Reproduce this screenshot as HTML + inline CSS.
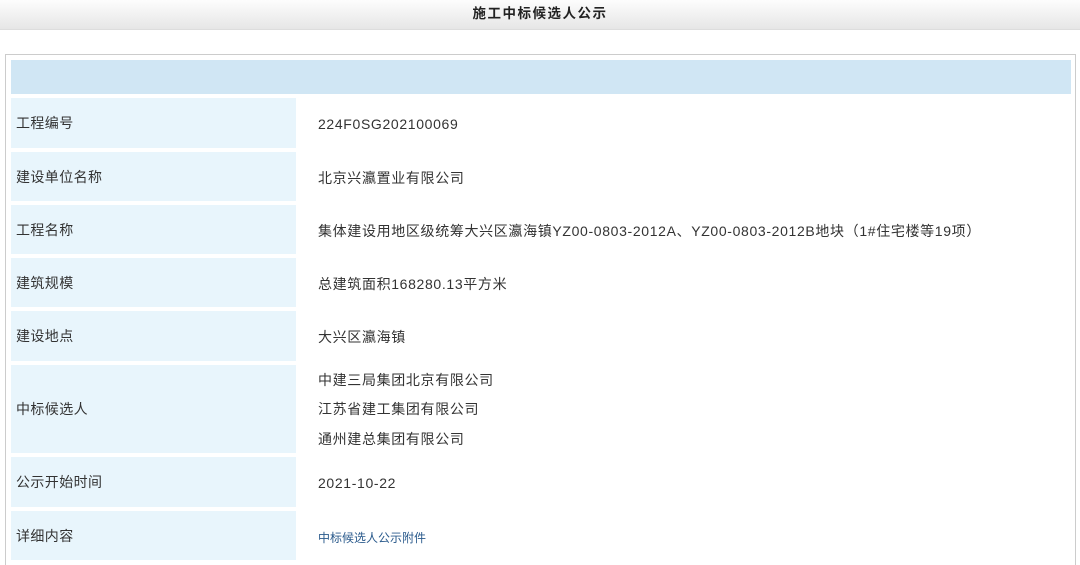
<!DOCTYPE html>
<html><head><meta charset="utf-8"><style>
html,body{margin:0;width:1080px;height:565px;overflow:hidden}
body{background:#fff;font-family:"Liberation Sans","Noto Sans CJK SC",sans-serif;color:#333;position:relative}
.top{position:absolute;left:0;top:0;width:1080px;height:29px;background:linear-gradient(#fdfdfd,#e6e6e6);border-bottom:1px solid #ddd;text-align:center;font-size:13.5px;letter-spacing:1.5px;font-weight:bold;line-height:27px;color:#222}
.box{position:absolute;left:5px;top:54px;width:1071px;height:520px;border:1px solid #ccc;box-sizing:border-box}
.hd{position:absolute;left:11px;top:60px;width:1060px;height:34px;background:#d0e6f4}
.l{position:absolute;left:11px;width:285px;background:#e8f5fc;font-size:14px;letter-spacing:0.4px;padding-left:5px;box-sizing:border-box;display:flex;align-items:center}
.v{position:absolute;left:318px;font-size:14px;letter-spacing:0.65px;display:flex;flex-direction:column;justify-content:center}
a{color:#2a5a8c;font-size:12px;letter-spacing:0;text-decoration:none}
</style></head><body>
<div class="top">施工中标候选人公示</div>
<div class="box"></div>
<div class="hd"></div>
<div class="l" style="top:98px;height:50px">工程编号</div><div class="v" style="top:99px;height:50px">224F0SG202100069</div>
<div class="l" style="top:152px;height:49px">建设单位名称</div><div class="v" style="top:153px;height:49px">北京兴瀛置业有限公司</div>
<div class="l" style="top:205px;height:49px">工程名称</div><div class="v" style="top:206px;height:49px">集体建设用地区级统筹大兴区瀛海镇YZ00-0803-2012A、YZ00-0803-2012B地块（1#住宅楼等19项）</div>
<div class="l" style="top:258px;height:49px">建筑规模</div><div class="v" style="top:259px;height:49px">总建筑面积168280.13平方米</div>
<div class="l" style="top:311px;height:50px">建设地点</div><div class="v" style="top:312px;height:50px">大兴区瀛海镇</div>
<div class="l" style="top:365px;height:88px">中标候选人</div><div class="v" style="top:366px;height:88px;line-height:29.5px">中建三局集团北京有限公司<br>江苏省建工集团有限公司<br>通州建总集团有限公司</div>
<div class="l" style="top:457px;height:50px">公示开始时间</div><div class="v" style="top:458px;height:50px">2021-10-22</div>
<div class="l" style="top:511px;height:49px">详细内容</div><div class="v" style="top:513px;height:49px"><a>中标候选人公示附件</a></div>
</body></html>
